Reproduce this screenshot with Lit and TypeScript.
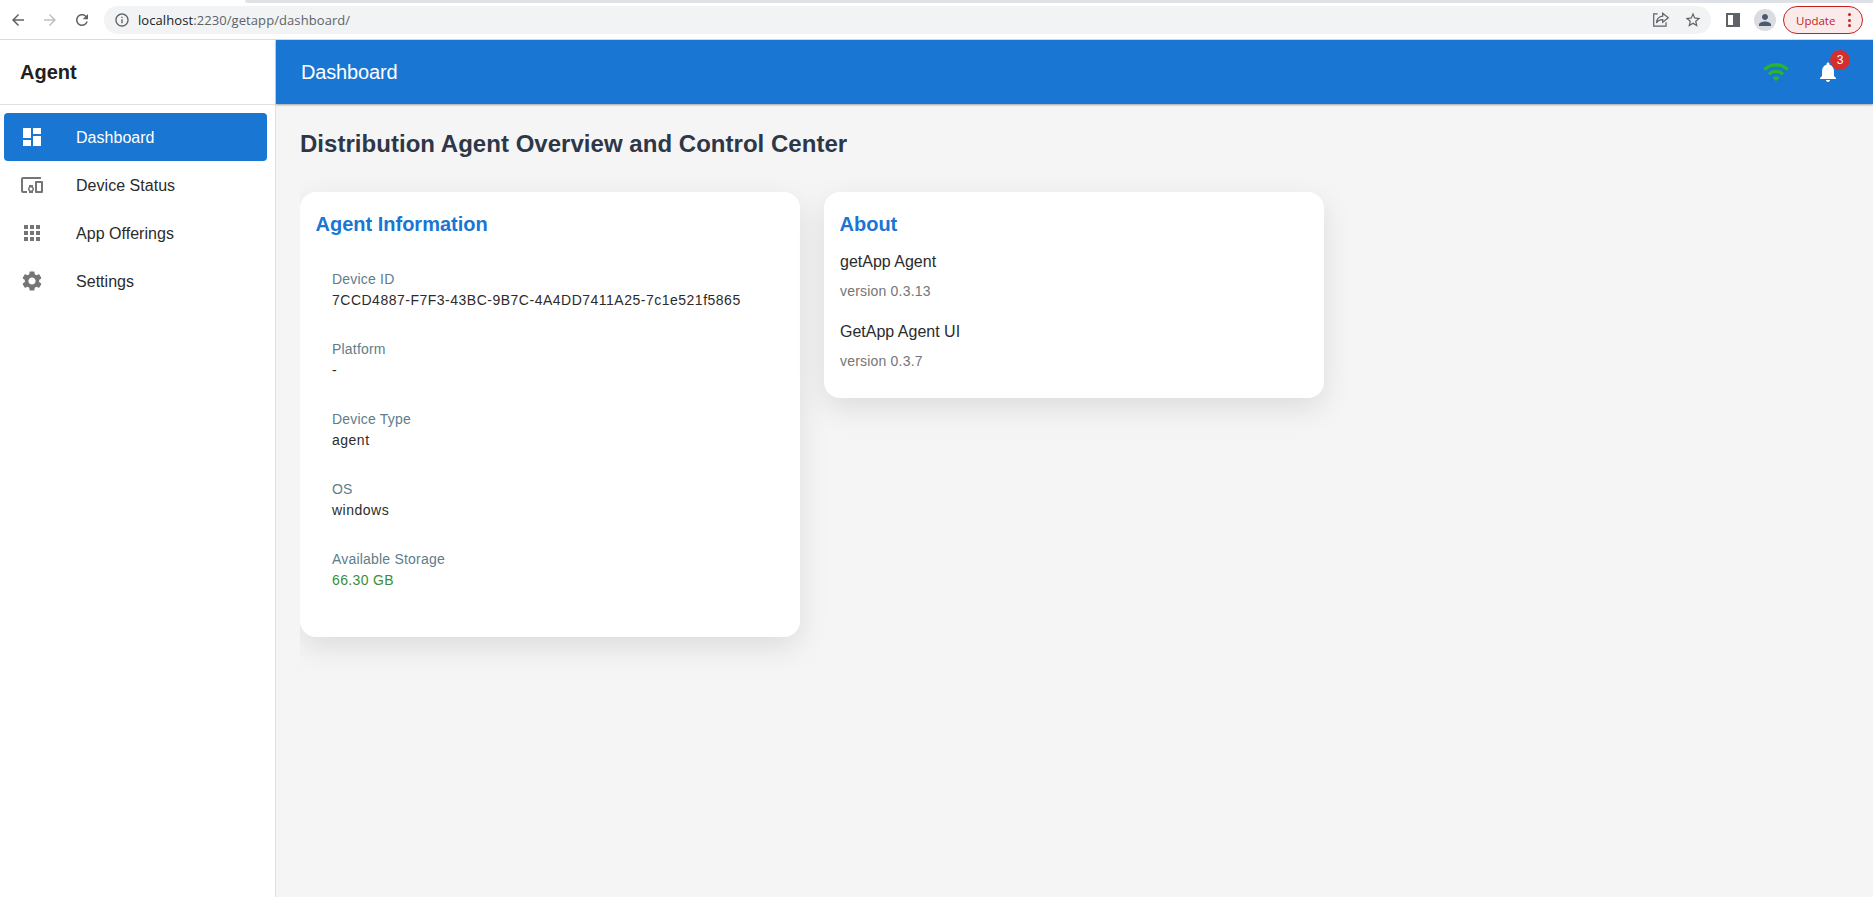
import { LitElement, html, css, svg } from "lit";
import { customElement } from "lit/decorators.js";

const P = {
  back: "M20 11H7.83l5.59-5.59L12 4l-8 8 8 8 1.41-1.41L7.83 13H20v-2z",
  forward: "M12 4l-1.41 1.41L16.17 11H4v2h12.17l-5.58 5.59L12 20l8-8z",
  reload: "M17.65 6.35C16.2 4.9 14.21 4 12 4c-4.42 0-7.99 3.58-7.99 8s3.57 8 7.99 8c3.73 0 6.84-2.55 7.73-6h-2.08c-.82 2.33-3.04 4-5.65 4-3.31 0-6-2.69-6-6s2.69-6 6-6c1.66 0 3.14.69 4.22 1.78L13 11h7V4l-2.35 2.35z",
  info: "M11 7h2v2h-2zm0 4h2v6h-2zm1-9C6.48 2 2 6.48 2 12s4.48 10 10 10 10-4.48 10-10S17.52 2 12 2zm0 18c-4.41 0-8-3.59-8-8s3.59-8 8-8 8 3.59 8 8-3.59 8-8 8z",
  star: "M22 9.24l-7.19-.62L12 2 9.19 8.63 2 9.24l5.46 4.73L5.82 21 12 17.27 18.18 21l-1.63-7.03L22 9.24zM12 15.4l-3.76 2.27 1-4.28-3.32-2.88 4.38-.38L12 6.1l1.71 4.04 4.38.38-3.32 2.88 1 4.28L12 15.4z",
  person: "M12 12c2.21 0 4-1.79 4-4s-1.79-4-4-4-4 1.79-4 4 1.79 4 4 4zm0 2c-2.67 0-8 1.34-8 4v2h16v-2c0-2.66-5.33-4-8-4z",
  dashboard: "M3 13h8V3H3v10zm0 8h8v-6H3v6zm10 0h8V11h-8v10zm0-18v6h8V3h-8z",
  devices: "M3 6h18V4H3c-1.1 0-2 .9-2 2v12c0 1.1.9 2 2 2h4v-2H3V6zm10 6H9v1.78c-.61.55-1 1.33-1 2.22s.39 1.67 1 2.22V20h4v-1.78c.61-.55 1-1.34 1-2.22s-.39-1.67-1-2.22V12zm-2 5.5c-.83 0-1.5-.67-1.5-1.5s.67-1.5 1.5-1.5 1.5.67 1.5 1.5-.67 1.5-1.5 1.5zM22 8h-6c-.5 0-1 .5-1 1v10c0 .5.5 1 1 1h6c.5 0 1-.5 1-1V9c0-.5-.5-1-1-1zm-1 10h-4v-8h4v8z",
  apps: "M4 8h4V4H4v4zm6 12h4v-4h-4v4zm-6 0h4v-4H4v4zm0-6h4v-4H4v4zm6 0h4v-4h-4v4zm6-10v4h4V4h-4zm-6 4h4V4h-4v4zm6 6h4v-4h-4v4zm0 6h4v-4h-4v4z",
  settings: "M19.14 12.94c.04-.3.06-.61.06-.94 0-.32-.02-.64-.07-.94l2.03-1.58c.18-.14.23-.41.12-.61l-1.92-3.32c-.12-.22-.37-.29-.59-.22l-2.39.96c-.5-.38-1.03-.7-1.62-.94l-.36-2.54c-.04-.24-.24-.41-.48-.41h-3.84c-.24 0-.43.17-.47.41l-.36 2.54c-.59.24-1.13.57-1.62.94l-2.39-.96c-.22-.08-.47 0-.59.22L2.74 8.87c-.12.21-.08.47.12.61l2.03 1.58c-.05.3-.09.63-.09.94s.02.64.07.94l-2.03 1.58c-.18.14-.23.41-.12.61l1.92 3.32c.12.22.37.29.59.22l2.39-.96c.5.38 1.03.7 1.62.94l.36 2.54c.05.24.24.41.48.41h3.84c.24 0 .44-.17.47-.41l.36-2.54c.59-.24 1.13-.56 1.62-.94l2.39.96c.22.08.47 0 .59-.22l1.92-3.32c.12-.22.07-.47-.12-.61l-2.01-1.58zM12 15.6c-1.98 0-3.6-1.62-3.6-3.6s1.62-3.6 3.6-3.6 3.6 1.62 3.6 3.6-1.62 3.6-3.6 3.6z",
  wifi: "M1 9l2 2c4.97-4.97 13.03-4.97 18 0l2-2C16.93 2.93 7.08 2.93 1 9zm8 8l3 3 3-3c-1.65-1.66-4.34-1.66-6 0zm-4-4l2 2c2.76-2.76 7.24-2.76 10 0l2-2C15.14 9.14 8.87 9.14 5 13z",
  bell: "M12 22c1.1 0 2-.9 2-2h-4c0 1.1.9 2 2 2zm6-6v-5c0-3.07-1.63-5.64-4.5-6.32V4c0-.83-.67-1.5-1.5-1.5s-1.5.67-1.5 1.5v.68C7.64 5.36 6 7.92 6 11v5l-2 2v1h16v-1l-2-2z",
};

const icon = (d: string, cls = "") =>
  html`<svg class=${cls} viewBox="0 0 24 24" aria-hidden="true">${svg`<path d=${d}></path>`}</svg>`;

@customElement("app-root")
export class AppRoot extends LitElement {
  static styles = css`
    :host { display: flex; flex-direction: column; width: 1873px; height: 897px; overflow: hidden; background: #fff; font-family: "Liberation Sans", Arial, sans-serif; color: #212121; }
    svg { display: block; fill: currentColor; flex: none; }

    .chrome { height: 39px; flex: none; border-bottom: 1px solid #dadce0; background: #fff; display: flex; flex-direction: column; }
    .strip { height: 3px; margin-left: 245px; background: #dee1e6; border-bottom-left-radius: 3px; flex: none; }
    .toolbar { flex: 1; display: flex; align-items: center; padding: 1px 10px 3px 2px; }
    .tbtn { width: 32px; height: 28px; display: flex; align-items: center; justify-content: center; flex: none; color: #5f6368; }
    .tbtn svg { width: 18px; height: 18px; }
    .tbtn.off { color: #bdc1c6; }
    .omni { flex: 1; height: 28px; margin: 0 6px; border-radius: 14px; background: #f1f3f4; display: flex; align-items: center; padding: 0 2px 0 10px; min-width: 0; }
    .omni .inf { width: 16px; height: 16px; color: #5f6368; flex: none; margin-right: 8px; }
    .url { flex: 1; font-family: "Open Sans", Roboto, sans-serif; font-size: 13px; letter-spacing: .08px; color: #5f6368; white-space: nowrap; }
    .url b { font-weight: 400; color: #202124; }
    .panel { width: 14px; height: 14px; background: #5f6368; padding: 2px 7px 2px 2px; box-sizing: border-box; }
    .panel i { display: block; width: 100%; height: 100%; background: #fff; }
    .avatar { width: 22px; height: 22px; border-radius: 50%; background: #dadce0; color: #4a5a70; display: flex; align-items: center; justify-content: center; }
    .avatar svg { width: 18px; height: 18px; }
    .update { width: 80px; height: 28px; box-sizing: border-box; margin-left: 2px; flex: none; border: 1px solid #c5221f; border-radius: 14px; background: #fbeaea; color: #c5221f; display: flex; align-items: center; padding-left: 12px; font-family: "Open Sans", Roboto, sans-serif; font-size: 11.5px; }
    .dots { margin-left: auto; margin-right: 11px; display: flex; flex-direction: column; gap: 2.5px; }
    .dots i { width: 3px; height: 3px; border-radius: 50%; background: #c5221f; display: block; }

    .body { flex: 1; display: flex; min-height: 0; }
    .side { width: 276px; flex: none; box-sizing: border-box; border-right: 1px solid #e0e0e0; background: #fff; }
    .brand { height: 65px; box-sizing: border-box; border-bottom: 1px solid #e0e0e0; display: flex; align-items: center; padding-left: 20px; font-size: 20px; font-weight: 700; color: #212121; }
    .nav { padding: 8px 8px 0 4px; display: flex; flex-direction: column; }
    .item { height: 48px; border-radius: 4px; display: flex; align-items: center; padding-left: 16px; font-size: 16px; letter-spacing: .03px; color: #2b2b2b; }
    .item svg { width: 24px; height: 24px; color: #757575; margin-right: 32px; }
    .item span { padding-top: 2px; }
    .item.on { background: #1976d2; color: #fff; }
    .item.on svg { color: #fff; }

    .main { flex: 1; min-width: 0; display: flex; flex-direction: column; background: #f5f5f5; }
    .bar { height: 64px; flex: none; background: #1976d2; color: #fff; display: flex; align-items: center; padding: 0 29px 0 25px; font-size: 20px; box-shadow: 0 1px 2px rgba(0,0,0,.35); position: relative; }
    .bar .title { flex: 1; letter-spacing: -.15px; }
    .wifi { width: 28px; height: 28px; color: #2ab52e; margin-right: 26px; margin-top: -1px; }
    .bell { position: relative; width: 24px; height: 24px; margin-right: 4px; }
    .bell svg { width: 24px; height: 24px; }
    .badge { position: absolute; top: -10px; left: 14px; width: 20px; height: 20px; border-radius: 50%; background: #d32f2f; color: #fff; font-size: 12px; display: flex; align-items: center; justify-content: center; }

    .content { padding: 24px 0 0 24px; flex: 1; min-height: 0; }
    h1 { margin: 0; font-size: 24px; line-height: 32px; font-weight: 700; color: #2d3748; letter-spacing: .03px; }
    .cards { display: flex; gap: 24px; align-items: flex-start; overflow: hidden; padding: 32px 60px 60px 0; }
    .card { width: 500px; flex: none; box-sizing: border-box; background: #fff; border-radius: 16px; padding: 16px; box-shadow: 0 10px 30px rgba(0,0,0,.1); }
    h2 { margin: 0 0 0 -.5px; font-size: 20px; line-height: 32px; font-weight: 700; color: #1976d2; }
    .fields { padding: 13.5px 0 17px 16px; }
    .field { height: 70px; box-sizing: border-box; padding-top: 15px; font-size: 14px; line-height: 20px; }
    .label { color: #607d8b; letter-spacing: .2px; }
    .value { color: #2b2b2b; margin-top: 1px; letter-spacing: .5px; }
    .value.ok { color: #388e3c; letter-spacing: .35px; }
    .app { font-size: 16px; line-height: 24px; color: #2b2b2b; }
    .ver { font-size: 14px; line-height: 20px; letter-spacing: .2px; color: #757575; margin: 7px 0 18.5px; }
    .about { padding-bottom: 27px; }
    .about .first { margin-top: 10px; }
    .ver.last { margin-bottom: 0; margin-top: 7px; }
  `;

  render() {
    const nav = [
      ["Dashboard", P.dashboard, true],
      ["Device Status", P.devices, false],
      ["App Offerings", P.apps, false],
      ["Settings", P.settings, false],
    ] as const;
    const fields = [
      ["Device ID", "7CCD4887-F7F3-43BC-9B7C-4A4DD7411A25-7c1e521f5865"],
      ["Platform", "-"],
      ["Device Type", "agent"],
      ["OS", "windows"],
      ["Available Storage", "66.30 GB"],
    ];
    return html`
      <div class="chrome">
        <div class="strip"></div>
        <div class="toolbar">
          <div class="tbtn">${icon(P.back)}</div>
          <div class="tbtn off">${icon(P.forward)}</div>
          <div class="tbtn">${icon(P.reload)}</div>
          <div class="omni">
            ${icon(P.info, "inf")}
            <div class="url"><b>localhost</b>:2230/getapp/dashboard/</div>
            <div class="tbtn">
              <svg viewBox="0 0 16 16" fill="none" stroke="currentColor" stroke-width="1.1">
                <path fill="none" d="M5 2.5H1.5v11h11V10"></path>
                <path fill="none" d="M9.5 2l5 4-5 4V7.6C7 7.6 5 8.6 4 10.6 4.2 7.2 6.2 4.8 9.5 4.5z"></path>
              </svg>
            </div>
            <div class="tbtn">${icon(P.star)}</div>
          </div>
          <div class="tbtn"><div class="panel"><i></i></div></div>
          <div class="tbtn"><div class="avatar">${icon(P.person)}</div></div>
          <div class="update">Update<div class="dots"><i></i><i></i><i></i></div></div>
        </div>
      </div>
      <div class="body">
        <aside class="side">
          <div class="brand">Agent</div>
          <nav class="nav">
            ${nav.map(([t, d, on]) => html`<div class="item ${on ? "on" : ""}">${icon(d)}<span>${t}</span></div>`)}
          </nav>
        </aside>
        <div class="main">
          <header class="bar">
            <div class="title">Dashboard</div>
            ${icon(P.wifi, "wifi")}
            <div class="bell">${icon(P.bell)}<span class="badge">3</span></div>
          </header>
          <div class="content">
            <h1>Distribution Agent Overview and Control Center</h1>
            <div class="cards">
              <section class="card">
                <h2>Agent Information</h2>
                <div class="fields">
                  ${fields.map(([l, v]) => html`<div class="field">
                    <div class="label">${l}</div>
                    <div class="value ${l === "Available Storage" ? "ok" : ""}">${v}</div>
                  </div>`)}
                </div>
              </section>
              <section class="card about">
                <h2>About</h2>
                <div class="app first">getApp Agent</div>
                <div class="ver">version 0.3.13</div>
                <div class="app">GetApp Agent UI</div>
                <div class="ver last">version 0.3.7</div>
              </section>
            </div>
          </div>
        </div>
      </div>
    `;
  }
}
